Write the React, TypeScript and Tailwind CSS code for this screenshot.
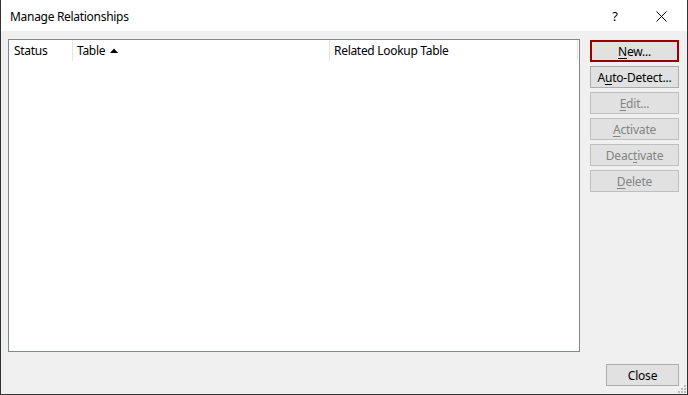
import React from "react";

const font = { fontFamily: '"Noto Sans", "Open Sans", sans-serif' };

function Btn({
  children,
  disabled,
  focused,
  className = "",
}: {
  children: React.ReactNode;
  disabled?: boolean;
  focused?: boolean;
  className?: string;
}) {
  const base =
    "h-[22px] flex items-center justify-center text-[12px] leading-none tracking-[-0.2px] bg-[#e1e1e1] pt-[1px] ";
  const border = focused
    ? "border-2 border-[#990000] "
    : disabled
    ? "border border-[#bfbfbf] "
    : "border border-[#adadad] ";
  const color = disabled ? "text-[#838383] " : "text-black ";
  return <div className={base + border + color + className}>{children}</div>;
}

export default function App() {
  return (
    <div
      className="w-[688px] h-[395px] bg-[#f0f0f0] border-x border-b border-[#333333] flex flex-col relative overflow-hidden"
      style={font}
    >
      {/* Title bar */}
      <div className="h-[31px] bg-white flex items-center pl-[9px] shrink-0">
        <span className="text-[12px] tracking-[-0.3px] text-black pt-[3px]">Manage Relationships</span>
        <div className="ml-auto flex items-center h-full pr-[1px]">
          <span className="text-[13px] text-black w-[46px] text-center pt-[2px] pr-[4px]">?</span>
          <div className="w-[46px] flex items-center justify-center pt-[1px] pr-[3px]">
            <svg width="11" height="11" viewBox="0 0 11 11">
              <path d="M0.5 0.5 L10.5 10.5 M10.5 0.5 L0.5 10.5" stroke="#000" strokeWidth="1" fill="none" />
            </svg>
          </div>
        </div>
      </div>

      {/* Body */}
      <div className="flex-1 flex pl-[7px] pt-[8px] pr-[8px] pb-[8px]">
        {/* List box */}
        <div className="w-[572px] h-[313px] border border-[#828790] bg-white shrink-0">
          <div className="flex h-[21px] text-[12px] tracking-[-0.3px] text-black">
            <div className="w-[64px] flex items-center pl-[5px] border-r border-[#e5e5e5]">Status</div>
            <div className="w-[257px] flex items-center pl-[4px] border-r border-[#e5e5e5]">
              Table
              <svg className="ml-[5px]" width="8" height="5" viewBox="0 0 8 5">
                <path d="M0 5 L4 0.5 L8 5 Z" fill="#000" />
              </svg>
            </div>
            <div className="w-[248px] flex items-center pl-[4px] border-r border-[#e5e5e5]">
              Related Lookup Table
            </div>
          </div>
        </div>

        {/* Buttons column */}
        <div className="ml-[10px] w-[89px] flex flex-col">
          <div className="mt-[1px] flex flex-col gap-[4px]">
            <Btn focused>
              <span>
                <span className="underline underline-offset-2">N</span>ew...
              </span>
            </Btn>
            <Btn>
              <span>
                A<span className="underline underline-offset-2">u</span>to-Detect...
              </span>
            </Btn>
            <Btn disabled>
              <span>
                <span className="underline underline-offset-2">E</span>dit...
              </span>
            </Btn>
            <Btn disabled>
              <span>
                <span className="underline underline-offset-2">A</span>ctivate
              </span>
            </Btn>
            <Btn disabled>
              <span>
                Deac<span className="underline underline-offset-2">t</span>ivate
              </span>
            </Btn>
            <Btn disabled>
              <span>
                <span className="underline underline-offset-2">D</span>elete
              </span>
            </Btn>
          </div>
          <Btn className="mt-auto ml-auto w-[73px]">Close</Btn>
        </div>
      </div>

      {/* Resize grip */}
      <svg className="absolute right-[1px] bottom-[1px]" width="8" height="8" viewBox="0 0 8 8">
        <rect x="6" y="0" width="2" height="2" fill="#bcbcbc" />
        <rect x="3" y="3" width="2" height="2" fill="#bcbcbc" />
        <rect x="6" y="3" width="2" height="2" fill="#bcbcbc" />
        <rect x="0" y="6" width="2" height="2" fill="#bcbcbc" />
        <rect x="3" y="6" width="2" height="2" fill="#bcbcbc" />
        <rect x="6" y="6" width="2" height="2" fill="#bcbcbc" />
      </svg>
    </div>
  );
}
